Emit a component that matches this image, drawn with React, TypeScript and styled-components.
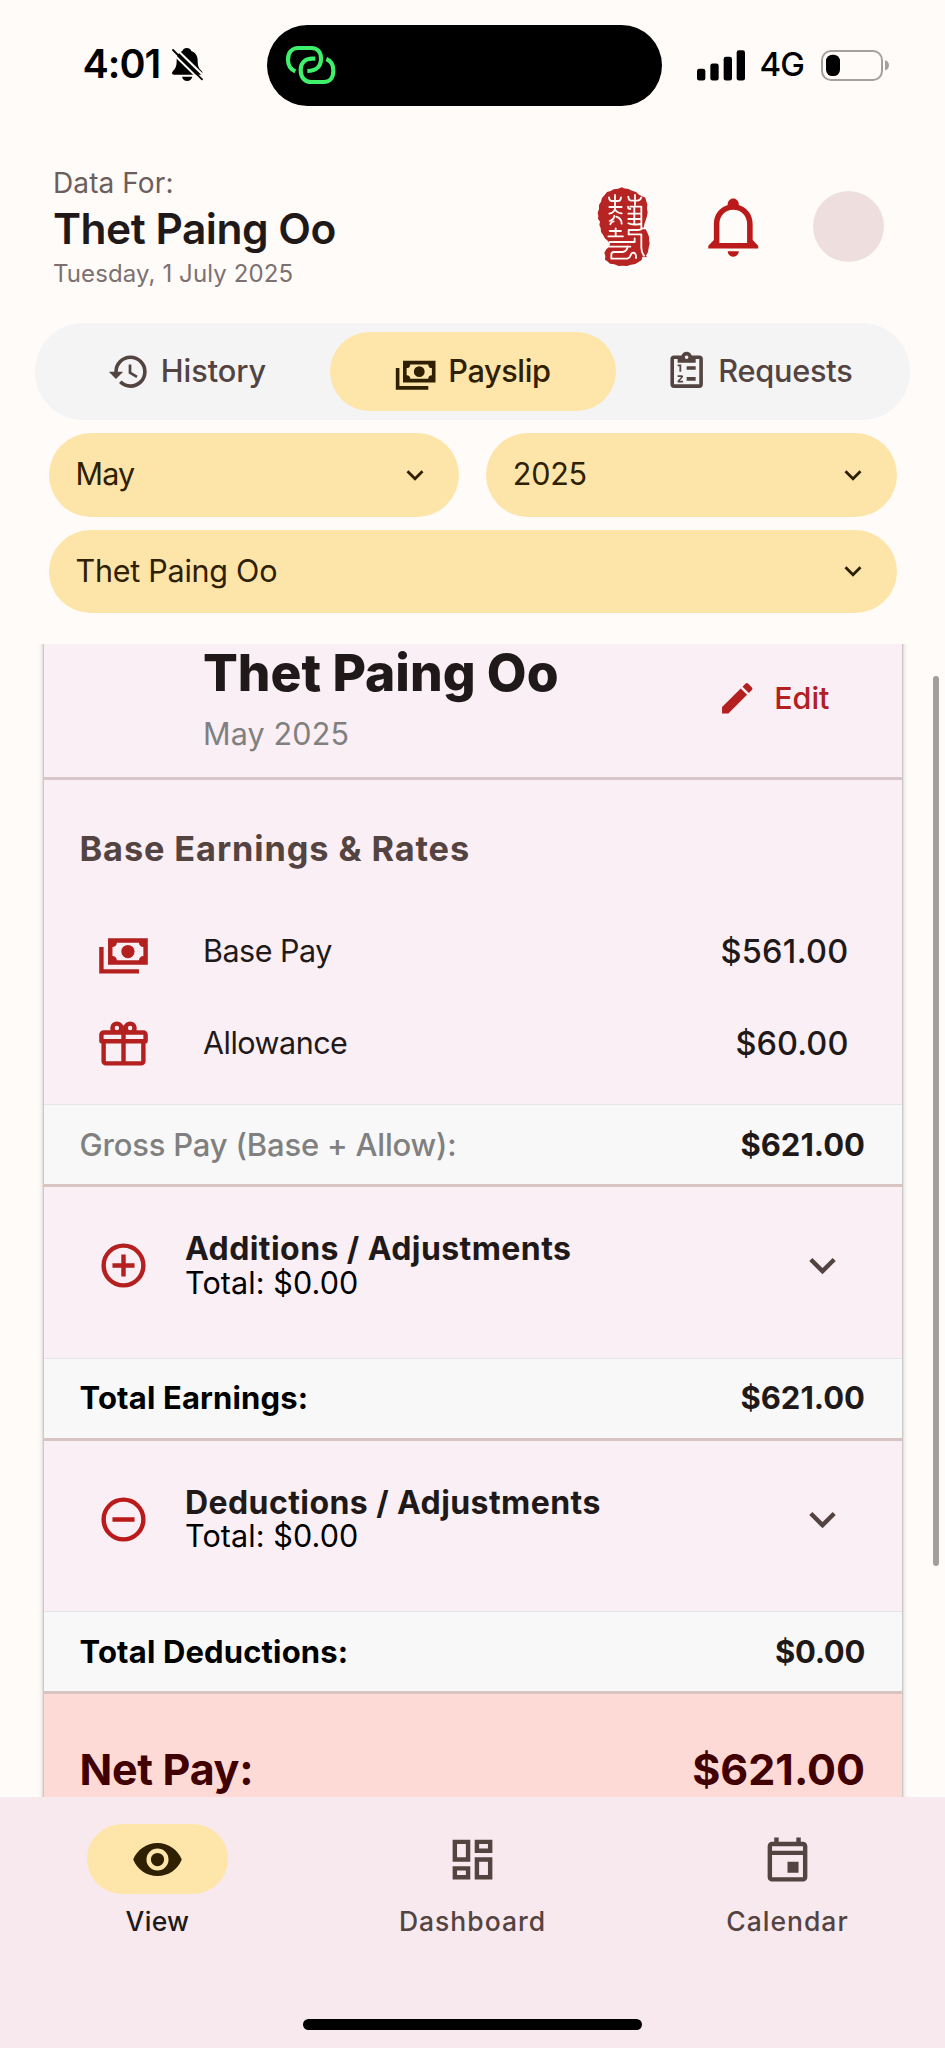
import React from "react";
import styled, { createGlobalStyle } from "styled-components";

const GlobalStyle = createGlobalStyle`
  * { box-sizing: border-box; }
  body {
    margin: 0;
    background: #fffbf8;
    font-family: Inter, "Liberation Sans", sans-serif;
    color: #1f1a19;
    -webkit-font-smoothing: antialiased;
  }
`;

const RED = "#b3201f";
const BROWN = "#534341";
const UMBER = "#2e2000";

const Screen = styled.main`
  width: 945px;
  height: 2048px;
  display: flex;
  flex-direction: column;
  overflow: hidden;
  background: #fffbf8;
`;

const Text = styled.span<{ $size: number; $weight?: number; $ls?: number; $color?: string; $lh?: number }>`
  display: block;
  white-space: nowrap;
  font-size: ${(p) => p.$size}px;
  font-weight: ${(p) => p.$weight ?? 400};
  letter-spacing: ${(p) => p.$ls ?? 0}px;
  line-height: ${(p) => (p.$lh ? `${p.$lh}px` : 1.2)};
  color: ${(p) => p.$color ?? "inherit"};
`;

/* ---------- icons ---------- */

const paths = {
  history:
    "M13.5,8H12V13L16.28,15.54L17,14.33L13.5,12.25V8M13,3A9,9 0 0,0 4,12H1L4.96,16.03L9,12H6A7,7 0 0,1 13,5A7,7 0 0,1 20,12A7,7 0 0,1 13,19C11.07,19 9.32,18.21 8.06,16.94L6.64,18.36C8.27,20 10.5,21 13,21A9,9 0 0,0 22,12A9,9 0 0,0 13,3",
  cash: "M5,6H23V18H5V6M14,9A3,3 0 0,1 17,12A3,3 0 0,1 14,15A3,3 0 0,1 11,12A3,3 0 0,1 14,9M9,8A2,2 0 0,1 7,10V14A2,2 0 0,1 9,16H19A2,2 0 0,1 21,14V10A2,2 0 0,1 19,8H9M1,10H3V20H19V22H1V10Z",
  clipboard:
    "M19,3H14.82C14.4,1.84 13.3,1 12,1C10.7,1 9.6,1.84 9.18,3H5A2,2 0 0,0 3,5V19A2,2 0 0,0 5,21H19A2,2 0 0,0 21,19V5A2,2 0 0,0 19,3M12,3A1,1 0 0,1 13,4A1,1 0 0,1 12,5A1,1 0 0,1 11,4A1,1 0 0,1 12,3M7,7H17V5H19V19H5V5H7V7M12,17V15H17V17H12M12,11V9H17V11H12M8,12V9H7V8H9V12H8M9.25,14A0.75,0.75 0 0,1 10,14.75C10,14.95 9.92,15.14 9.79,15.27L8.12,17H10V18H7V17.08L9,15H7V14H9.25",
  chevron: "M7.41,8.58L12,13.17L16.59,8.58L18,10L12,16L6,10L7.41,8.58Z",
  pencil:
    "M20.71,7.04C21.1,6.65 21.1,6 20.71,5.63L18.37,3.29C18,2.9 17.35,2.9 16.96,3.29L15.12,5.12L18.87,8.87M3,17.25V21H6.75L17.81,9.93L14.06,6.18L3,17.25Z",
  gift: "M22,12V20A2,2 0 0,1 20,22H4A2,2 0 0,1 2,20V12A1,1 0 0,1 1,11V8A2,2 0 0,1 3,6H6.17C6.06,5.69 6,5.35 6,5A3,3 0 0,1 9,2C10,2 10.88,2.5 11.43,3.24V3.23L12,4L12.57,3.23V3.24C13.12,2.5 14,2 15,2A3,3 0 0,1 18,5C18,5.35 17.94,5.69 17.83,6H21A2,2 0 0,1 23,8V11A1,1 0 0,1 22,12M4,20H11V12H4V20M20,20V12H13V20H20M9,4A1,1 0 0,0 8,5A1,1 0 0,0 9,6A1,1 0 0,0 10,5A1,1 0 0,0 9,4M15,4A1,1 0 0,0 14,5A1,1 0 0,0 15,6A1,1 0 0,0 16,5A1,1 0 0,0 15,4M3,8V10H11V8H3M13,8V10H21V8H13Z",
  plus: "M12,20C7.59,20 4,16.41 4,12C4,7.59 7.59,4 12,4C16.41,4 20,7.59 20,12C20,16.41 16.41,20 12,20M12,2A10,10 0 0,0 2,12A10,10 0 0,0 12,22A10,10 0 0,0 22,12A10,10 0 0,0 12,2M13,7H11V11H7V13H11V17H13V13H17V11H13V7Z",
  minus:
    "M12,20C7.59,20 4,16.41 4,12C4,7.59 7.59,4 12,4C16.41,4 20,7.59 20,12C20,16.41 16.41,20 12,20M12,2A10,10 0 0,0 2,12A10,10 0 0,0 12,22A10,10 0 0,0 22,12A10,10 0 0,0 12,2M7,13H17V11H7",
  eye: "M12,9A3,3 0 0,0 9,12A3,3 0 0,0 12,15A3,3 0 0,0 15,12A3,3 0 0,0 12,9M12,17A5,5 0 0,1 7,12A5,5 0 0,1 12,7A5,5 0 0,1 17,12A5,5 0 0,1 12,17M12,4.5C7,4.5 2.73,7.61 1,12C2.73,16.39 7,19.5 12,19.5C17,19.5 21.27,16.39 23,12C21.27,7.61 17,4.5 12,4.5Z",
  dashboard:
    "M19,5V7H15V5H19M9,5V11H5V5H9M19,13V19H15V13H19M9,17V19H5V17H9M21,3H13V9H21V3M11,3H3V13H11V3M21,11H13V21H21V11M11,15H3V21H11V15Z",
  calendar:
    "M19 4h-1V2h-2v2H8V2H6v2H5C3.89 4 3.01 4.9 3.01 6L3 20a2 2 0 0 0 2 2h14c1.1 0 2-.9 2-2V6c0-1.1-.9-2-2-2zm0 16H5V10h14v10zm0-12H5V6h14v2zM12 13h5v5h-5z",
  bell: "M10 21H14C14 22.1 13.1 23 12 23S10 22.1 10 21M21 19V20H3V19L5 17V11C5 7.9 7 5.2 10 4.3V4C10 2.9 10.9 2 12 2S14 2.9 14 4V4.3C17 5.2 19 7.9 19 11V17L21 19M17 11C17 8.2 14.8 6 12 6S7 8.2 7 11V18H17V11Z",
};

const Svg = styled.svg`
  display: block;
  flex: none;
`;

function Icon({ name, size, color }: { name: keyof typeof paths; size: number; color: string }) {
  return (
    <Svg width={size} height={size} viewBox="0 0 24 24" fill={color} fillRule="evenodd">
      <path d={paths[name]} />
    </Svg>
  );
}

function MutedBell() {
  return (
    <Svg width="35" height="35" viewBox="300 81 105 105">
      <path
        d="M350 84c7 0 12 4 14 9c13 5 19 15 19 29c0 16 3 22 12 31c4 5 3 11-4 11H312c-7 0-7-6-3-11c8-9 11-15 11-31c0-14 5-24 17-29c2-5 7-9 13-9z"
        fill="#000"
      />
      <path d="M336 170h31c-2 8-8 13-15.500 13s-14-5-15.500-13z" fill="#000" />
      <path d="M303 95L395 185" stroke="#fffbf8" strokeWidth="6" />
      <path d="M316 84L404 170" stroke="#fffbf8" strokeWidth="6" />
      <path d="M309 90L396 178" stroke="#000" strokeWidth="5.500" strokeLinecap="round" />
    </Svg>
  );
}

function LinkGlyph() {
  return (
    <Svg width="52" height="40" viewBox="642 75 156 120" fill="none" stroke="#3ff06a" strokeWidth="12.500" strokeLinecap="butt">
      <path d="M673 154C657 147 651 133 651 119C651 98 663 84 682 84H721C741 84 750 98 750 116C750 138 737 153 709 153" />
      <path d="M733 116H724C702 116 689 130 689 150C689 172 701 186 721 186H758C778 186 787 171 787 152C787 136 781 123 766 117" />
    </Svg>
  );
}

function Signal() {
  return (
    <Svg width="48" height="31" viewBox="139 85 144 92">
      <rect x="139" y="141" width="25" height="35" rx="7" />
      <rect x="179" y="125" width="25" height="51" rx="7" />
      <rect x="219" y="105" width="25" height="71" rx="7" />
      <rect x="258" y="85" width="25" height="91" rx="7" />
    </Svg>
  );
}

function Battery() {
  return (
    <Svg width="68" height="31" viewBox="510 84 204 93">
      <rect x="513" y="87" width="180" height="87" rx="27" fill="none" stroke="#a3a09e" strokeWidth="6" />
      <rect x="525" y="98" width="42" height="64" rx="19" fill="#000" />
      <path d="M702 115c7 1 12 7 12 15s-5 14-12 15z" fill="#a3a09e" />
    </Svg>
  );
}

function Seal() {
  return (
    <Svg width="54" height="80" viewBox="112 80 162 240">
      <path
        d="M187 81L192 84L206 86L217 91L229 95L238 103L246 107L257 112L260 123L263 132L262 145L264 156L262 168L258 180L254 192L252 202L259 208L264 219L268 229L268 240L270 249L267 262L265 275L259 286L262 290L254 291L248 289L246 299L237 305L227 311L214 313L202 317L188 316L177 317L164 312L151 310L142 302L136 298L137 287L134 277L140 267L149 259L151 250L144 241L135 233L130 223L124 215L123 203L119 194L121 184L115 175L116 167L114 157L118 146L118 134L124 124L127 113L135 104L142 95L153 92L162 87L175 85Z"
        fill="#b62423"
      />
      <g fill="none" stroke="#fffbf8" strokeWidth="5.500" strokeLinejoin="round" strokeLinecap="round">
        <path d="M148 111q1 11 10 11h16q9 0 10-11M166 104v46" />
        <path d="M206 109q1 12 9 12h18q9 0 12-10M226 104v30" />
        <path d="M149 140h37M149 160q12-2 17-13q6 11 20 12M150 182q12-4 14-15M186 190q0-15-16-21M152 192q2-8 10-9" />
        <path d="M205 139q0 7 7 7M212 139h33v66M224 139v50M206 160h34M206 176h34M206 189q10 6 36 2" />
        <path d="M150 212h34M168 204v22M146 228h44M207 222v-13h28q8 0 13-5h8" />
        <path d="M207 222h38v40q0 14 8 24M150 245h75M225 234v11M150 259h62" />
        <path d="M204 259q-2 14-15 16h-26q-8 0-8 8v12h48q8-2 10-10q2-8 9-8q8 2 7 16" />
      </g>
    </Svg>
  );
}

/* ---------- status bar ---------- */

const StatusBar = styled.div`
  height: 130px;
  flex: none;
  display: grid;
  grid-template-columns: 266.5px 395px 1fr;
  align-items: center;
`;
const Clock = styled.div`
  display: flex;
  align-items: center;
  gap: 10px;
  padding-left: 82.500px;
`;
const Island = styled.div`
  height: 81px;
  border-radius: 41px;
  background: #000;
  display: flex;
  align-items: center;
  padding-left: 18px;
`;
const StatusRight = styled.div`
  display: flex;
  align-items: center;
  padding-left: 35px;
`;
const Network = styled.div`
  width: 76px;
  padding-left: 15px;
`;

/* ---------- header ---------- */

const Header = styled.header`
  height: 193px;
  flex: none;
  display: flex;
  justify-content: space-between;
  padding: 0 61.5px 0 53px;
`;
const HeaderText = styled.div`
  padding-top: 36px;
`;
const HeaderActions = styled.div`
  display: flex;
  align-items: center;
`;
const BellButton = styled.div`
  margin: 0 46px 0 49px;
`;
const Avatar = styled.div`
  width: 71px;
  height: 71px;
  border-radius: 50%;
  background: #eedfde;
`;

/* ---------- tabs and filters ---------- */

const Tabs = styled.nav`
  flex: none;
  margin: 0 35px;
  height: 97px;
  padding: 9px 8.5px;
  border-radius: 48px;
  background: #f4f4f5;
  display: grid;
  grid-template-columns: repeat(3, 1fr);
`;
const Tab = styled.div<{ $active?: boolean }>`
  display: flex;
  align-items: center;
  justify-content: center;
  gap: 10.500px;
  border-radius: 40px;
  color: ${(p) => (p.$active ? UMBER : BROWN)};
  background: ${(p) => (p.$active ? "#fee5a9" : "transparent")};
`;
const Filters = styled.div`
  flex: none;
  display: grid;
  grid-template-columns: 1fr 1fr;
  gap: 13px 26.5px;
  margin: 13px 48.5px 30.500px;
`;
const Select = styled.div<{ $wide?: boolean }>`
  grid-column: ${(p) => (p.$wide ? "1 / -1" : "auto")};
  height: 83.500px;
  border-radius: 42px;
  background: #fde5aa;
  color: ${UMBER};
  display: flex;
  align-items: center;
  justify-content: space-between;
  padding: 0 27px;
`;

/* ---------- payslip card ---------- */

const ScrollArea = styled.section`
  flex: 1;
  min-height: 0;
  overflow: hidden;
  position: relative;
  padding: 0 43.500px;
`;
const ScrollThumb = styled.div`
  position: absolute;
  right: 6.500px;
  top: 32px;
  width: 6px;
  height: 890px;
  border-radius: 3px;
  background: #a19e9c;
`;
const Card = styled.article`
  height: 1300px;
  margin-top: -20px;
  padding-top: 20px;
  background: #faeff4;
  box-shadow: 0 0 3px rgba(0, 0, 0, 0.4), 0 2px 8px rgba(0, 0, 0, 0.12);
`;
const CardHead = styled.div`
  height: 136px;
  border-bottom: 3px solid #d8c5c9;
  display: flex;
  justify-content: space-between;
  padding: 0 72px 0 159.500px;
`;
const EditButton = styled.div`
  height: 109px;
  display: flex;
  align-items: center;
  gap: 17px;
`;
const SectionTitle = styled.div`
  height: 125.500px;
  padding: 49px 0 0 36px;
`;
const Row = styled.div`
  height: 92px;
  display: flex;
  align-items: center;
  padding: 0 53px 0 53.500px;
`;
const RowLabel = styled.div`
  flex: 1;
  padding-left: 53px;
`;
const Summary = styled.div<{ $spaced?: boolean }>`
  margin-top: ${(p) => (p.$spaced ? 15 : 0)}px;
  height: 83px;
  border-top: 1px solid #e6e4e6;
  border-bottom: 3px solid #d8c5c3;
  background: #f8f8f8;
  display: flex;
  align-items: center;
  justify-content: space-between;
  padding: 0 36.500px 0 36px;
`;
const Accordion = styled.div`
  height: 170.500px;
  padding: 0 53px 13px 53.500px;
  display: flex;
  align-items: center;
`;
const AccordionText = styled.div`
  flex: 1;
  padding-left: 35px;
`;
const NetPay = styled.div`
  height: 160px;
  background: #fddad6;
  display: flex;
  justify-content: space-between;
  padding: 49.500px 36.500px 0 36px;
`;

/* ---------- bottom navigation ---------- */

const BottomNav = styled.footer`
  flex: none;
  height: 251px;
  background: #f8e9ee;
  display: flex;
  flex-direction: column;
  justify-content: space-between;
  align-items: center;
  padding: 27px 0 18px;
`;
const NavItems = styled.div`
  width: 100%;
  display: grid;
  grid-template-columns: repeat(3, 1fr);
`;
const NavItem = styled.div`
  display: flex;
  flex-direction: column;
  align-items: center;
  gap: 10.500px;
`;
const NavPill = styled.div<{ $active?: boolean }>`
  width: 141px;
  height: 70px;
  border-radius: 35px;
  display: flex;
  align-items: center;
  justify-content: center;
  background: ${(p) => (p.$active ? "#fee6aa" : "transparent")};
`;
const HomeIndicator = styled.div`
  width: 339px;
  height: 11px;
  border-radius: 6px;
  background: #000;
`;

export default function App() {
  return (
    <>
      <GlobalStyle />
      <Screen>
        <StatusBar>
          <Clock>
            <Text $size={39.5} $weight={600} $ls={-1} $color="#000">4:01</Text>
            <MutedBell />
          </Clock>
          <Island>
            <LinkGlyph />
          </Island>
          <StatusRight>
            <Signal />
            <Network>
              <Text $size={33} $weight={500} $ls={-1} $color="#000">4G</Text>
            </Network>
            <Battery />
          </StatusRight>
        </StatusBar>

        <Header>
          <HeaderText>
            <Text $size={28} $lh={34} $ls={0.1} $color="#6b5e5c">Data For:</Text>
            <Text $size={42.5} $lh={58} $weight={600} $ls={-0.5}>Thet Paing Oo</Text>
            <Text $size={24} $lh={32} $ls={0.1} $color="#7c7170">Tuesday, 1 July 2025</Text>
          </HeaderText>
          <HeaderActions>
            <Seal />
            <BellButton>
              <Icon name="bell" size={66.5} color="#ba1a1a" />
            </BellButton>
            <Avatar />
          </HeaderActions>
        </Header>

        <Tabs>
          <Tab>
            <Icon name="history" size={43.3} color={BROWN} />
            <Text $size={30.7} $weight={500} $ls={-0.1}>History</Text>
          </Tab>
          <Tab $active>
            <Icon name="cash" size={43.3} color={UMBER} />
            <Text $size={30.7} $weight={500} $ls={-0.4}>Payslip</Text>
          </Tab>
          <Tab>
            <Icon name="clipboard" size={43.3} color={BROWN} />
            <Text $size={30.7} $weight={500} $ls={-0.25}>Requests</Text>
          </Tab>
        </Tabs>

        <Filters>
          <Select>
            <Text $size={30.5} $ls={-0.9}>May</Text>
            <Icon name="chevron" size={34} color={UMBER} />
          </Select>
          <Select>
            <Text $size={30.5} $ls={-0.2}>2025</Text>
            <Icon name="chevron" size={34} color={UMBER} />
          </Select>
          <Select $wide>
            <Text $size={30.5} $ls={-0.25}>Thet Paing Oo</Text>
            <Icon name="chevron" size={34} color={UMBER} />
          </Select>
        </Filters>

        <ScrollArea>
          <Card>
            <CardHead>
              <div>
                <Text $size={51.5} $lh={57} $weight={800}>Thet Paing Oo</Text>
                <Text $size={30.5} $lh={66} $ls={0.15} $color="#808080">May 2025</Text>
              </div>
              <EditButton>
                <Icon name="pencil" size={40.5} color={RED} />
                <Text $size={30.5} $weight={500} $color={RED}>Edit</Text>
              </EditButton>
            </CardHead>
            <SectionTitle>
              <Text $size={34.3} $lh={40} $weight={700} $ls={0.9} $color={BROWN}>Base Earnings &amp; Rates</Text>
            </SectionTitle>
            <Row>
              <Icon name="cash" size={53} color={RED} />
              <RowLabel><Text $size={30.5} $ls={-0.5}>Base Pay</Text></RowLabel>
              <Text $size={32.5} $weight={500} $ls={0.3}>$561.00</Text>
            </Row>
            <Row>
              <Icon name="gift" size={53} color={RED} />
              <RowLabel><Text $size={30.5} $ls={-0.5}>Allowance</Text></RowLabel>
              <Text $size={32.5} $weight={500} $ls={0.1}>$60.00</Text>
            </Row>
            <Summary $spaced>
              <Text $size={31} $weight={500} $ls={-0.2} $color="#808080">Gross Pay (Base + Allow):</Text>
              <Text $size={31} $weight={700}>$621.00</Text>
            </Summary>
            <Accordion>
              <Icon name="plus" size={53} color={RED} />
              <AccordionText>
                <Text $size={32} $lh={33.5} $weight={700} $ls={0.42}>Additions / Adjustments</Text>
                <Text $size={30.5} $lh={33.5} $ls={0.1} $color="#000">Total: $0.00</Text>
              </AccordionText>
              <Icon name="chevron" size={53} color={BROWN} />
            </Accordion>
            <Summary>
              <Text $size={31} $weight={700} $ls={0.15} $color="#000">Total Earnings:</Text>
              <Text $size={31} $weight={700}>$621.00</Text>
            </Summary>
            <Accordion>
              <Icon name="minus" size={53} color="#ba1a1a" />
              <AccordionText>
                <Text $size={32} $lh={33.5} $weight={700} $ls={0.42}>Deductions / Adjustments</Text>
                <Text $size={30.5} $lh={33.5} $ls={0.1} $color="#000">Total: $0.00</Text>
              </AccordionText>
              <Icon name="chevron" size={53} color={BROWN} />
            </Accordion>
            <Summary>
              <Text $size={31} $weight={700} $ls={0.15} $color="#000">Total Deductions:</Text>
              <Text $size={31} $weight={700} $ls={-0.3}>$0.00</Text>
            </Summary>
            <NetPay>
              <Text $size={43} $lh={50} $weight={700} $ls={-0.3} $color="#410002">Net Pay:</Text>
              <Text $size={43} $lh={50} $weight={700} $color="#410002">$621.00</Text>
            </NetPay>
          </Card>
          <ScrollThumb />
        </ScrollArea>

        <BottomNav>
          <NavItems>
            <NavItem>
              <NavPill $active><Icon name="eye" size={53} color={UMBER} /></NavPill>
              <Text $size={26.5} $lh={32} $weight={500} $ls={0.3}>View</Text>
            </NavItem>
            <NavItem>
              <NavPill><Icon name="dashboard" size={53} color={BROWN} /></NavPill>
              <Text $size={26.5} $lh={32} $weight={500} $ls={1} $color={BROWN}>Dashboard</Text>
            </NavItem>
            <NavItem>
              <NavPill><Icon name="calendar" size={53} color={BROWN} /></NavPill>
              <Text $size={26.5} $lh={32} $weight={500} $ls={1} $color={BROWN}>Calendar</Text>
            </NavItem>
          </NavItems>
          <HomeIndicator />
        </BottomNav>
      </Screen>
    </>
  );
}
